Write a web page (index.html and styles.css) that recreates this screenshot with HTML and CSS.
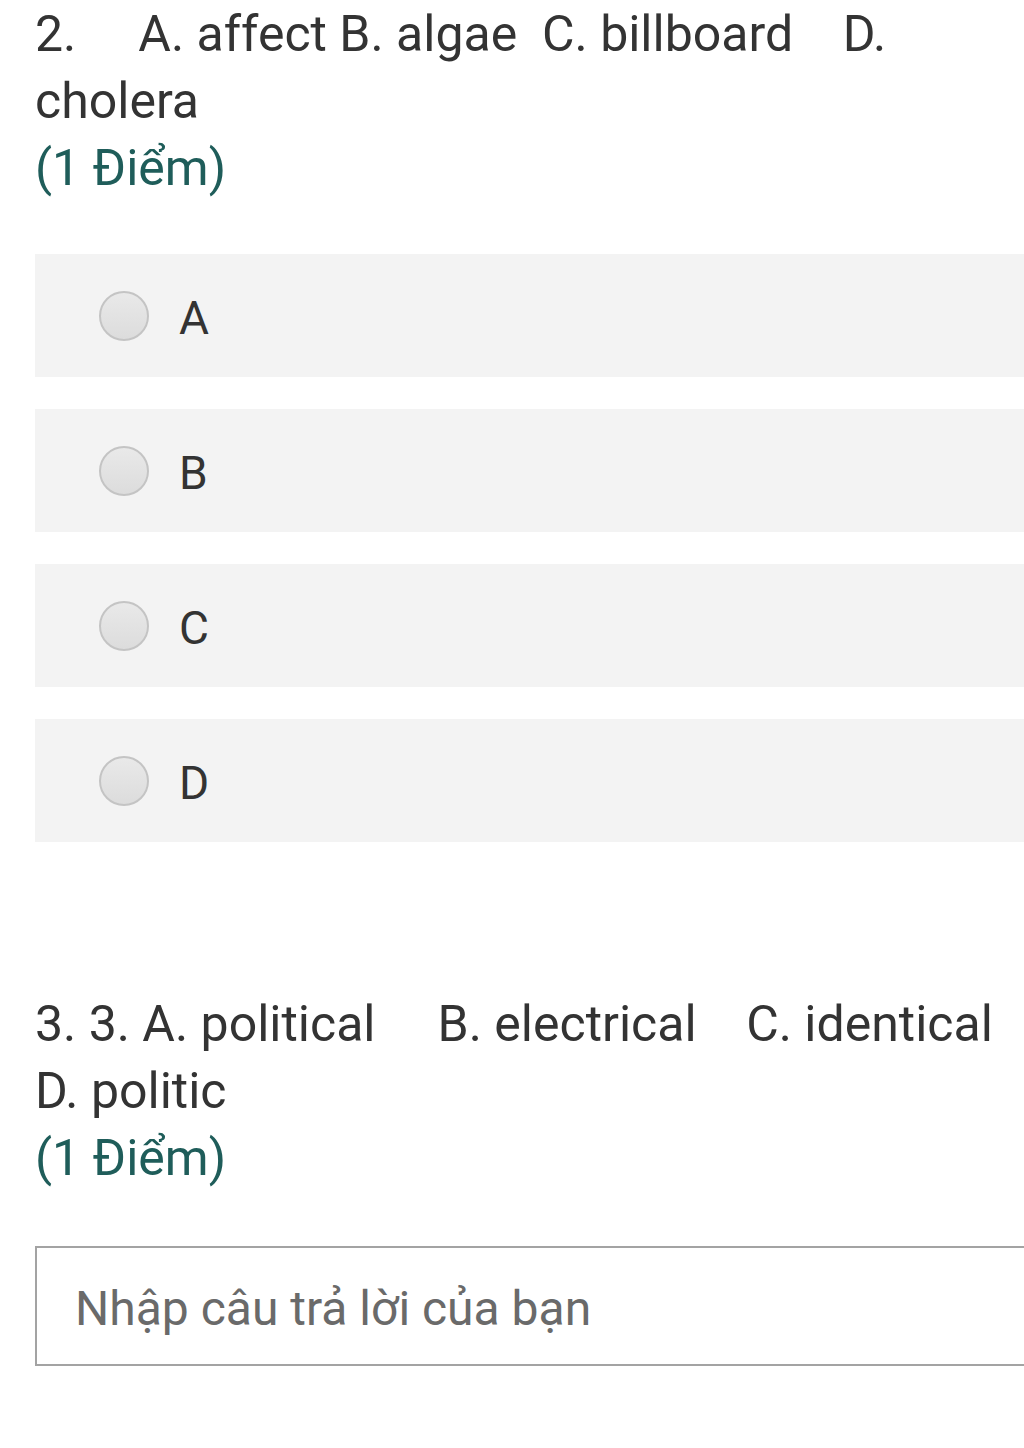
FILE: index.html
```html
<!DOCTYPE html>
<html lang="vi">
<head>
  <meta charset="UTF-8" />
  <title>Biểu mẫu</title>
  <link rel="stylesheet" href="styles.css">
</head>
<body>
  <div class="form">
    <div class="question">
      <div class="q-title">2.     A. affect B. algae  C. billboard    D. cholera</div>
      <div class="q-points">(1 Điểm)</div>

      <div class="choices">
        <label class="choice"><span class="radio"></span><span class="choice-text">A</span></label>
        <label class="choice"><span class="radio"></span><span class="choice-text">B</span></label>
        <label class="choice"><span class="radio"></span><span class="choice-text">C</span></label>
        <label class="choice"><span class="radio"></span><span class="choice-text">D</span></label>
      </div>
    </div>

    <div class="question q-text">
      <div class="q-title">3. 3. A. political     B. electrical    C. identical D. politic</div>
      <div class="q-points">(1 Điểm)</div>

      <div class="answer-box">
        <input type="text" class="answer" placeholder="Nhập câu trả lời của bạn" />
      </div>
    </div>
  </div>
</body>
</html>
```

FILE: styles.css
```css
body {
  margin: 0;
  background: white;
  font-family: Roboto, "Noto Sans", sans-serif;
  color: #333;
  overflow: hidden;
}

.form {
  padding: 0 0 0 35px;
  width: 1040px;
}

.question {
  padding-top: 1px;
}

.q-title {
  font-size: 50px;
  line-height: 67px;
  white-space: pre-wrap;
  width: 975px;
}

.q-points {
  font-size: 50px;
  line-height: 67px;
  color: #1f5d5a;
}

.choices {
  margin-top: 52px;
}

.choice {
  display: flex;
  align-items: center;
  height: 123px;
  margin-bottom: 32px;
  background: #f3f3f3;
  padding-left: 64px;
}

.radio {
  width: 46px;
  height: 46px;
  border-radius: 50%;
  border: 2px solid #c4c4c4;
  background: linear-gradient(#e9e9e9, #dcdcdc);
  margin-right: 30px;
}

.choice-text {
  font-size: 46px;
  color: #333;
  padding-top: 4px;
}

.q-text {
  margin-top: 148px;
}

.answer-box {
  margin-top: 54px;
}

.answer {
  width: 100%;
  height: 120px;
  box-sizing: border-box;
  border: 2px solid #a3a3a3;
  padding: 4px 0 0 38px;
  font-family: Roboto, "Noto Sans", sans-serif;
  font-size: 48px;
  color: #333;
  outline: none;
}

.answer::placeholder {
  color: #6a6a6a;
}
```
